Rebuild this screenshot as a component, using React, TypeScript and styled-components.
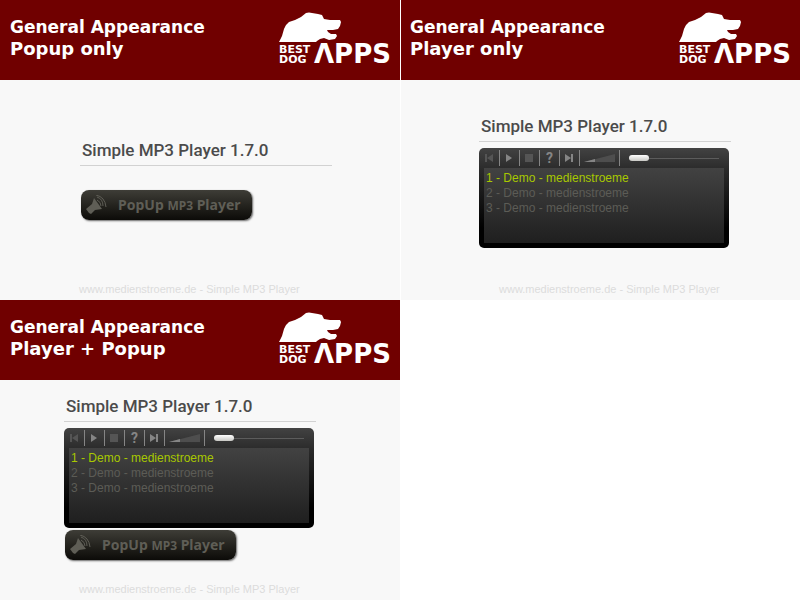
import React from 'react';
import styled, { createGlobalStyle } from 'styled-components';

const GlobalStyle = createGlobalStyle`
  *, *::before, *::after { box-sizing: border-box; }
  body { margin: 0; background: #fff; font-family: 'Liberation Sans', Arial, sans-serif; }
`;

const Gallery = styled.main`
  display: grid;
  grid-template-columns: repeat(2, minmax(0, 1fr));
`;

const Card = styled.section<{ $divided?: boolean }>`
  display: flex;
  flex-direction: column;
  min-height: 300px;
  background: #f8f8f8;
  border-left: ${p => (p.$divided ? '1px solid #fff' : '0')};
`;

const Banner = styled.header<{ $inset: number }>`
  display: flex;
  justify-content: space-between;
  align-items: flex-start;
  height: 80px;
  padding: 12px 8px 0 ${p => p.$inset}px;
  background: #700000;
  color: #fff;
`;

const Heading = styled.h2`
  margin: 4px 0 0;
  font: bold 17px/22px 'DejaVu Sans', Verdana, sans-serif;
  white-space: nowrap;
`;

const HeadingLine = styled.span<{ $large?: boolean }>`
  display: block;
  font-size: ${p => (p.$large ? 18 : 17)}px;
`;

const LogoArt = styled.svg`
  flex: none;
  display: block;
  fill: #fff;
  font-family: 'DejaVu Sans', Verdana, sans-serif;
  font-weight: bold;
`;

const Content = styled.div<{ $top: number; $inset: number }>`
  flex: 1;
  padding: ${p => p.$top}px 0 0 ${p => p.$inset}px;
`;

const Title = styled.h1`
  width: 252px;
  height: 28px;
  margin: 0;
  padding-left: 2px;
  border-bottom: 1px solid #d2d2d2;
  color: #4b4b4b;
  font: 500 17px/24px Roboto, sans-serif;
  white-space: nowrap;
`;

const PopupButton = styled.button<{ $gap: number }>`
  display: flex;
  align-items: center;
  gap: 11px;
  width: 171px;
  height: 30px;
  margin: ${p => p.$gap}px 0 0 1px;
  padding: 0 0 0 5px;
  border: 0;
  border-radius: 8px;
  background: linear-gradient(#3e3d37, #25241f 50%, #0c0b08);
  box-shadow: 1px 1px 2px #666;
  color: #5f5e56;
  font: bold 14px/20px 'Noto Sans', sans-serif;
  white-space: nowrap;
`;

const SmallCaps = styled.span`
  font-size: 12px;
`;

const Player = styled.div`
  width: 250px;
  margin-top: 6px;
  padding: 0 5px 5px;
  border-radius: 5px;
  background: linear-gradient(#424242, #2a2a2a 22px, #000 80px);
`;

const Controls = styled.div`
  display: flex;
  align-items: center;
  height: 20px;
`;

const Control = styled.button<{ $width?: number }>`
  display: block;
  flex: none;
  width: ${p => p.$width ?? 20}px;
  height: 16px;
  padding: 0;
  border: 0;
  border-right: 1px solid #858585;
  background: none;
  color: #858585;
  font: bold 14px/16px Roboto, sans-serif;

  svg { display: block; }
`;

const Position = styled.input`
  appearance: none;
  width: 90px;
  height: 16px;
  margin: 0 0 0 9px;
  background: linear-gradient(#5c5c5c, #5c5c5c) center / 100% 1px no-repeat;
  &::-webkit-slider-thumb {
    appearance: none;
    width: 20px;
    height: 6px;
    border-radius: 3px;
    background: linear-gradient(#fff, #c8c8c4);
  }
`;

const Playlist = styled.ol`
  height: 75px;
  margin: 0;
  padding: 3px 2px 0;
  list-style: none;
  background: linear-gradient(#424242, #1f1f1f);
  font-size: 12px;
  line-height: 15px;
`;

const Track = styled.li<{ $active?: boolean }>`
  color: ${p => (p.$active ? '#a8c800' : '#5c5c56')};
`;

const Footer = styled.footer<{ $inset: number }>`
  height: 19px;
  padding-left: ${p => p.$inset}px;
  color: #dcdcdc;
  font-size: 11px;
  line-height: 16px;
`;

function Logo() {
  return (
    <LogoArt width="113" height="60" viewBox="0 0 113 60" overflow="visible" role="img" aria-label="Best Dog Apps">
      <path d="M0 30 L3 24 L5 17 Q6 13 10 10 L16 8 L22 5 L27 1 Q30 0 33 1 L39 2 L43 3 L45 7 L51 8 L61 8 L62 10 L61 14 L59 17 L54 18 L48 18 L49 20 L52 22 L57 22 L58 24 L56 27 L50 28 L45 26 L41 27 L38 29 L37 30 Z" />
      <text x="0" y="41" fontSize="11">BEST</text>
      <text x="0" y="51" fontSize="11">DOG</text>
      <text x="35" y="51" fontSize="26">ΛPPS</text>
    </LogoArt>
  );
}

function PopupPlayer({ gap }: { gap: number }) {
  return (
    <PopupButton type="button" $gap={gap}>
      <svg width="21" height="20" viewBox="0 0 21 20" fill="#5f5e56" aria-hidden="true">
        <path d="M0 14 L6 9 L8 3 L16 14 L9 15 L5 19 L3 18 Z" />
        <path d="M11 5 Q15 7 15 11 M11 2 Q17 4 17 11 M10 0 Q19 2 20 12" fill="none" stroke="#5f5e56" />
      </svg>
      <span>PopUp <SmallCaps>MP3</SmallCaps> Player</span>
    </PopupButton>
  );
}

function Mp3Player() {
  return (
    <Player>
      <Controls>
        <Control $width={16} aria-label="Previous"><svg width="15" height="16"><path d="M1 4h2v8H1zM9 4v8L3 8z" fill="#555" /></svg></Control>
        <Control aria-label="Play"><svg width="19" height="16"><path d="M6 4v8l6-4z" fill="currentColor" /></svg></Control>
        <Control aria-label="Stop"><svg width="19" height="16"><path d="M5 4h8v8H5z" fill="#555" /></svg></Control>
        <Control aria-label="Random">?</Control>
        <Control aria-label="Next"><svg width="19" height="16"><path d="M5 4l6 4-6 4zM11 4h2v8h-2z" fill="currentColor" /></svg></Control>
        <Control $width={40} aria-label="Volume"><svg width="39" height="16"><path d="M4 12L35 4v8z" fill="#4e4e4e" /><path d="M4 12l11-3v3z" fill="#858585" /></svg></Control>
        <Position type="range" defaultValue={0} aria-label="Position" />
      </Controls>
      <Playlist>
        <Track $active>1 - Demo - medienstroeme</Track>
        <Track>2 - Demo - medienstroeme</Track>
        <Track>3 - Demo - medienstroeme</Track>
      </Playlist>
    </Player>
  );
}

interface DemoProps {
  mode: string;
  top: number;
  inset: number;
  player?: boolean;
  popupGap?: number;
  divided?: boolean;
}

function Demo({ mode, top, inset, player, popupGap, divided }: DemoProps) {
  return (
    <Card $divided={divided}>
      <Banner $inset={divided ? 9 : 10}>
        <Heading>
          <HeadingLine>General Appearance</HeadingLine>
          <HeadingLine $large>{mode}</HeadingLine>
        </Heading>
        <Logo />
      </Banner>
      <Content $top={top} $inset={inset}>
        <Title>Simple MP3 Player 1.7.0</Title>
        {player && <Mp3Player />}
        {popupGap !== undefined && <PopupPlayer gap={popupGap} />}
      </Content>
      <Footer $inset={divided ? 98 : 79}>www.medienstroeme.de - Simple MP3 Player</Footer>
    </Card>
  );
}

export default function App() {
  return (
    <>
      <GlobalStyle />
      <Gallery>
        <Demo mode="Popup only" top={58} inset={80} popupGap={24} />
        <Demo mode="Player only" top={34} inset={78} player divided />
        <Demo mode="Player + Popup" top={14} inset={64} player popupGap={2} />
      </Gallery>
    </>
  );
}
